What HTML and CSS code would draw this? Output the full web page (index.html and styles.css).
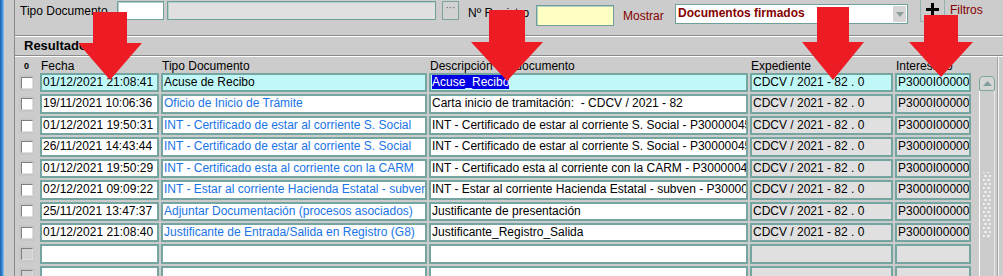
FILE: index.html
```html
<!DOCTYPE html>
<html lang="es">

<head>
    <meta charset="UTF-8">
    <title>Documentos firmados</title>
    <link rel="stylesheet" href="styles.css">
</head>

<body>
    <div class="window">
        <div class="edge"></div>
        <div class="gutter"></div>
        <div class="panel">
            <div class="filters">
                <span class="label lbl-tipo">Tipo Documento</span>
                <div class="field f-code"></div>
                <div class="field f-name"></div>
                <div class="btn-dots">···</div>
                <span class="label lbl-reg">Nº Registro</span>
                <div class="field f-reg"></div>
                <span class="label dark lbl-show">Mostrar</span>
                <div class="select">
                    <span>Documentos firmados</span>
                    <div class="select-btn">
                        <svg width="8" height="5" viewBox="0 0 8 5"><path d="M0 0h8L4 5z" fill="#8c9c9b"/></svg>
                    </div>
                </div>
                <div class="btn-plus">
                    <svg width="13" height="13" viewBox="0 0 13 13"><path d="M5 0h3v5h5v3H8v5H5V8H0V5h5z" fill="#000"/></svg>
                </div>
                <span class="label dark lbl-filt">Filtros</span>
            </div>

            <div class="results-bar">Resultados</div>

            <div class="results">
                <div class="table">
                    <div class="thead">
                        <span class="th-sel">0</span>
                        <span>Fecha</span>
                        <span>Tipo Documento</span>
                        <span>Descripción del documento</span>
                        <span>Expediente</span>
                        <span>Interesado</span>
                    </div>
                    <div class="tbody">
                        <div class="row current">
                            <div class="sel"><i><b></b></i></div>
                            <div class="cell">01/12/2021 21:08:41</div>
                            <div class="cell">Acuse de Recibo</div>
                            <div class="cell"><span class="mark">Acuse_Recibo</span></div>
                            <div class="cell grey">CDCV / 2021 - 82 . 0</div>
                            <div class="cell grey">P3000I00000</div>
                        </div>
                        <div class="row">
                            <div class="sel"><i><b></b></i></div>
                            <div class="cell">19/11/2021 10:06:36</div>
                            <div class="cell link">Oficio de Inicio de Trámite</div>
                            <div class="cell">Carta inicio de tramitación:&nbsp; - CDCV / 2021 - 82</div>
                            <div class="cell grey">CDCV / 2021 - 82 . 0</div>
                            <div class="cell grey">P3000I00000</div>
                        </div>
                        <div class="row">
                            <div class="sel"><i><b></b></i></div>
                            <div class="cell">01/12/2021 19:50:31</div>
                            <div class="cell link">INT - Certificado de estar al corriente S. Social</div>
                            <div class="cell">INT - Certificado de estar al corriente S. Social - P30000045</div>
                            <div class="cell grey">CDCV / 2021 - 82 . 0</div>
                            <div class="cell grey">P3000I00000</div>
                        </div>
                        <div class="row">
                            <div class="sel"><i><b></b></i></div>
                            <div class="cell">26/11/2021 14:43:44</div>
                            <div class="cell link">INT - Certificado de estar al corriente S. Social</div>
                            <div class="cell">INT - Certificado de estar al corriente S. Social - P30000045</div>
                            <div class="cell grey">CDCV / 2021 - 82 . 0</div>
                            <div class="cell grey">P3000I00000</div>
                        </div>
                        <div class="row">
                            <div class="sel"><i><b></b></i></div>
                            <div class="cell">01/12/2021 19:50:29</div>
                            <div class="cell link">INT - Certificado esta al corriente con la CARM</div>
                            <div class="cell">INT - Certificado esta al corriente con la CARM - P30000045</div>
                            <div class="cell grey">CDCV / 2021 - 82 . 0</div>
                            <div class="cell grey">P3000I00000</div>
                        </div>
                        <div class="row">
                            <div class="sel"><i><b></b></i></div>
                            <div class="cell">02/12/2021 09:09:22</div>
                            <div class="cell link">INT - Estar al corriente Hacienda Estatal - subvenciones</div>
                            <div class="cell">INT - Estar al corriente Hacienda Estatal - subven - P30000045</div>
                            <div class="cell grey">CDCV / 2021 - 82 . 0</div>
                            <div class="cell grey">P3000I00000</div>
                        </div>
                        <div class="row">
                            <div class="sel"><i><b></b></i></div>
                            <div class="cell">25/11/2021 13:47:37</div>
                            <div class="cell link">Adjuntar Documentación (procesos asociados)</div>
                            <div class="cell">Justificante de presentación</div>
                            <div class="cell grey">CDCV / 2021 - 82 . 0</div>
                            <div class="cell grey">P3000I00000</div>
                        </div>
                        <div class="row">
                            <div class="sel"><i><b></b></i></div>
                            <div class="cell">01/12/2021 21:08:40</div>
                            <div class="cell link">Justificante de Entrada/Salida en Registro (G8)</div>
                            <div class="cell">Justificante_Registro_Salida</div>
                            <div class="cell grey">CDCV / 2021 - 82 . 0</div>
                            <div class="cell grey">P3000I00000</div>
                        </div>
                        <div class="row empty">
                            <div class="sel"><i><b></b></i></div>
                            <div class="cell"></div>
                            <div class="cell"></div>
                            <div class="cell"></div>
                            <div class="cell grey"></div>
                            <div class="cell grey"></div>
                        </div>
                        <div class="row empty">
                            <div class="sel"><i><b></b></i></div>
                            <div class="cell"></div>
                            <div class="cell"></div>
                            <div class="cell"></div>
                            <div class="cell grey"></div>
                            <div class="cell grey"></div>
                        </div>
                    </div>
                </div>

                <div class="scroll">
                    <div class="bar">
                        <div class="up">
                            <svg width="9" height="5" viewBox="0 0 9 5"><path d="M0 5L4.5 0L9 5z" fill="#7f9f9c"/></svg>
                        </div>
                        <div class="track">
                            <div class="grip"></div>
                        </div>
                    </div>
                    <div class="rail"></div>
                </div>
            </div>
        </div>
    </div>

    <!-- red arrows drawn over the screenshot -->
    <svg class="arrows" width="1003" height="276" viewBox="0 0 1003 276">
        <g fill="#ed1c24">
            <polygon points="93,12 127,12 127,43 142,43 110,80 78,43 93,43"/>
            <polygon points="489,10 525,10 525,42 543,42 507,81 471,42 489,42"/>
            <polygon points="817,7 849,7 849,42 864,42 833,80 802,42 817,42"/>
            <polygon points="924,15 958,15 958,42 973,42 941,77 909,42 924,42"/>
        </g>
    </svg>
</body>

</html>
```

FILE: styles.css
```css
* {
    box-sizing: border-box;
    margin: 0;
    padding: 0;
}

body {
    position: relative;
    width: 1003px;
    height: 276px;
    overflow: hidden;
    background: #cccccc;
    font-family: "Liberation Sans", Arial, sans-serif;
    font-size: 12px;
    color: #000;
}

.window {
    display: flex;
    height: 276px;
}

.edge {
    width: 4px;
    background: linear-gradient(to right, #1b5ea6, #3d8fdc 60%, #9cc8ee);
}

.gutter {
    width: 10px;
}

.panel {
    flex: 1;
    display: flex;
    flex-direction: column;
    border-left: 1px solid #8a8a8a;
    min-width: 0;
}

/* filter bar */
.filters {
    height: 36px;
    display: flex;
    align-items: flex-start;
    padding-left: 5px;
    border-bottom: 1px solid #8a8a8a;
}

.label {
    line-height: 14px;
    white-space: nowrap;
}

.dark {
    color: #850000;
}

.field {
    border: 1px solid #6f9f9b;
    box-shadow: inset 1px 1px 0 #b4d0cd;
    background: #fff;
}

.lbl-tipo {
    width: 97px;
    margin-top: 4px;
}

.f-code {
    width: 47px;
    height: 19px;
    margin-top: 1px;
}

.f-name {
    width: 269px;
    height: 19px;
    margin-top: 1px;
    margin-left: 3px;
    background: #e0e0e0;
}

.btn-dots {
    width: 17px;
    height: 19px;
    margin-top: 1px;
    margin-left: 6px;
    border: 1px solid #7aa39f;
    background: #d2d2d2;
    text-align: center;
    font-size: 10px;
    line-height: 12px;
    color: #555;
}

.lbl-reg {
    width: 68px;
    margin-left: 9px;
    margin-top: 6px;
}

.f-reg {
    width: 78px;
    height: 21px;
    margin-top: 5px;
    background: #ffffc4;
}

.lbl-show {
    width: 52px;
    margin-left: 9px;
    margin-top: 9px;
}

.select {
    width: 233px;
    height: 20px;
    margin-top: 4px;
    display: flex;
    border: 1px solid #6f9f9b;
    background: #fff;
}

.select span {
    flex: 1;
    padding-left: 2px;
    font-weight: bold;
    line-height: 17px;
    color: #850000;
}

.select-btn {
    width: 13px;
    margin: 1px;
    background: #d6d6d6;
    display: flex;
    align-items: center;
    justify-content: center;
}

.btn-plus {
    width: 25px;
    height: 22px;
    margin-left: 12px;
    border: 1px solid #93b3b0;
    border-top: none;
    display: flex;
    align-items: center;
    justify-content: center;
    padding-bottom: 2px;
}

.lbl-filt {
    margin-left: 5px;
    margin-top: 3px;
}

/* results title */
.results-bar {
    height: 20px;
    border-top: 1px solid #fff;
    border-bottom: 1px solid #8a8a8a;
    padding-left: 9px;
    font-size: 13px;
    font-weight: bold;
    line-height: 18px;
}

/* grid */
.results {
    flex: 1;
    display: flex;
    border-top: 1px solid #fff;
    min-height: 0;
}

.table {
    width: 956px;
}

.thead,
.row {
    display: grid;
    grid-template-columns: 23px 119px 266px 319px 143px 76px;
    column-gap: 2px;
}

.thead {
    height: 16px;
    line-height: 18px;
}

.thead span {
    padding-left: 1px;
    white-space: nowrap;
}

.thead .th-sel {
    padding-left: 0;
    text-align: center;
    font-size: 9px;
    font-weight: bold;
}

.tbody {
    display: flex;
    flex-direction: column;
    gap: 2px;
}

.row {
    height: 19.43px;
    flex-shrink: 0;
}

.cell {
    border: 2px solid #74a5a1;
    background: #fff;
    padding-left: 1px;
    line-height: 15px;
    white-space: nowrap;
    overflow: hidden;
}

.cell.grey {
    background: #e0e0e0;
}

.row.current .cell {
    background: #c0f8f8;
}

.link {
    color: #1874e8;
}

.mark {
    background: #0000e6;
    color: #fff;
}

.sel {
    display: flex;
    align-items: center;
    justify-content: center;
}

.sel i {
    width: 15px;
    height: 16px;
    background: #c6c6c6;
    display: flex;
    align-items: center;
    justify-content: center;
}

.sel b {
    width: 12px;
    height: 12px;
    border: 1px solid;
    border-color: #7f7f7f #dedede #dedede #7f7f7f;
    background: #fff;
}

.row.empty .sel b {
    background: #d2d2d2;
}

/* scrollbar */
.scroll {
    flex: 1;
    display: flex;
    padding-top: 19px;
}

.bar {
    width: 16px;
    margin-left: 8px;
    display: flex;
    flex-direction: column;
}

.up {
    height: 15px;
    border: 1px solid #7aa6a2;
    border-radius: 4px 4px 2px 2px;
    background: #d6d6d6;
    display: flex;
    align-items: center;
    justify-content: center;
}

.track {
    flex: 1;
    border-left: 1px solid #fff;
    border-right: 1px solid #e6e6e6;
}

.grip {
    width: 8px;
    height: 66px;
    margin: 81px auto 0;
    background:
        radial-gradient(circle, #f4f4f4 1px, transparent 1.4px) 0 0 / 5px 8px,
        radial-gradient(circle, #f4f4f4 1px, transparent 1.4px) 3px 4px / 5px 8px;
}

.rail {
    width: 2px;
    margin-left: 2px;
    margin-top: -19px;
    border-left: 1px solid #a4a4a4;
    border-right: 1px solid #f2f2f2;
}

/* annotation overlay */
.arrows {
    position: absolute;
    left: 0;
    top: 0;
    pointer-events: none;
}
```
